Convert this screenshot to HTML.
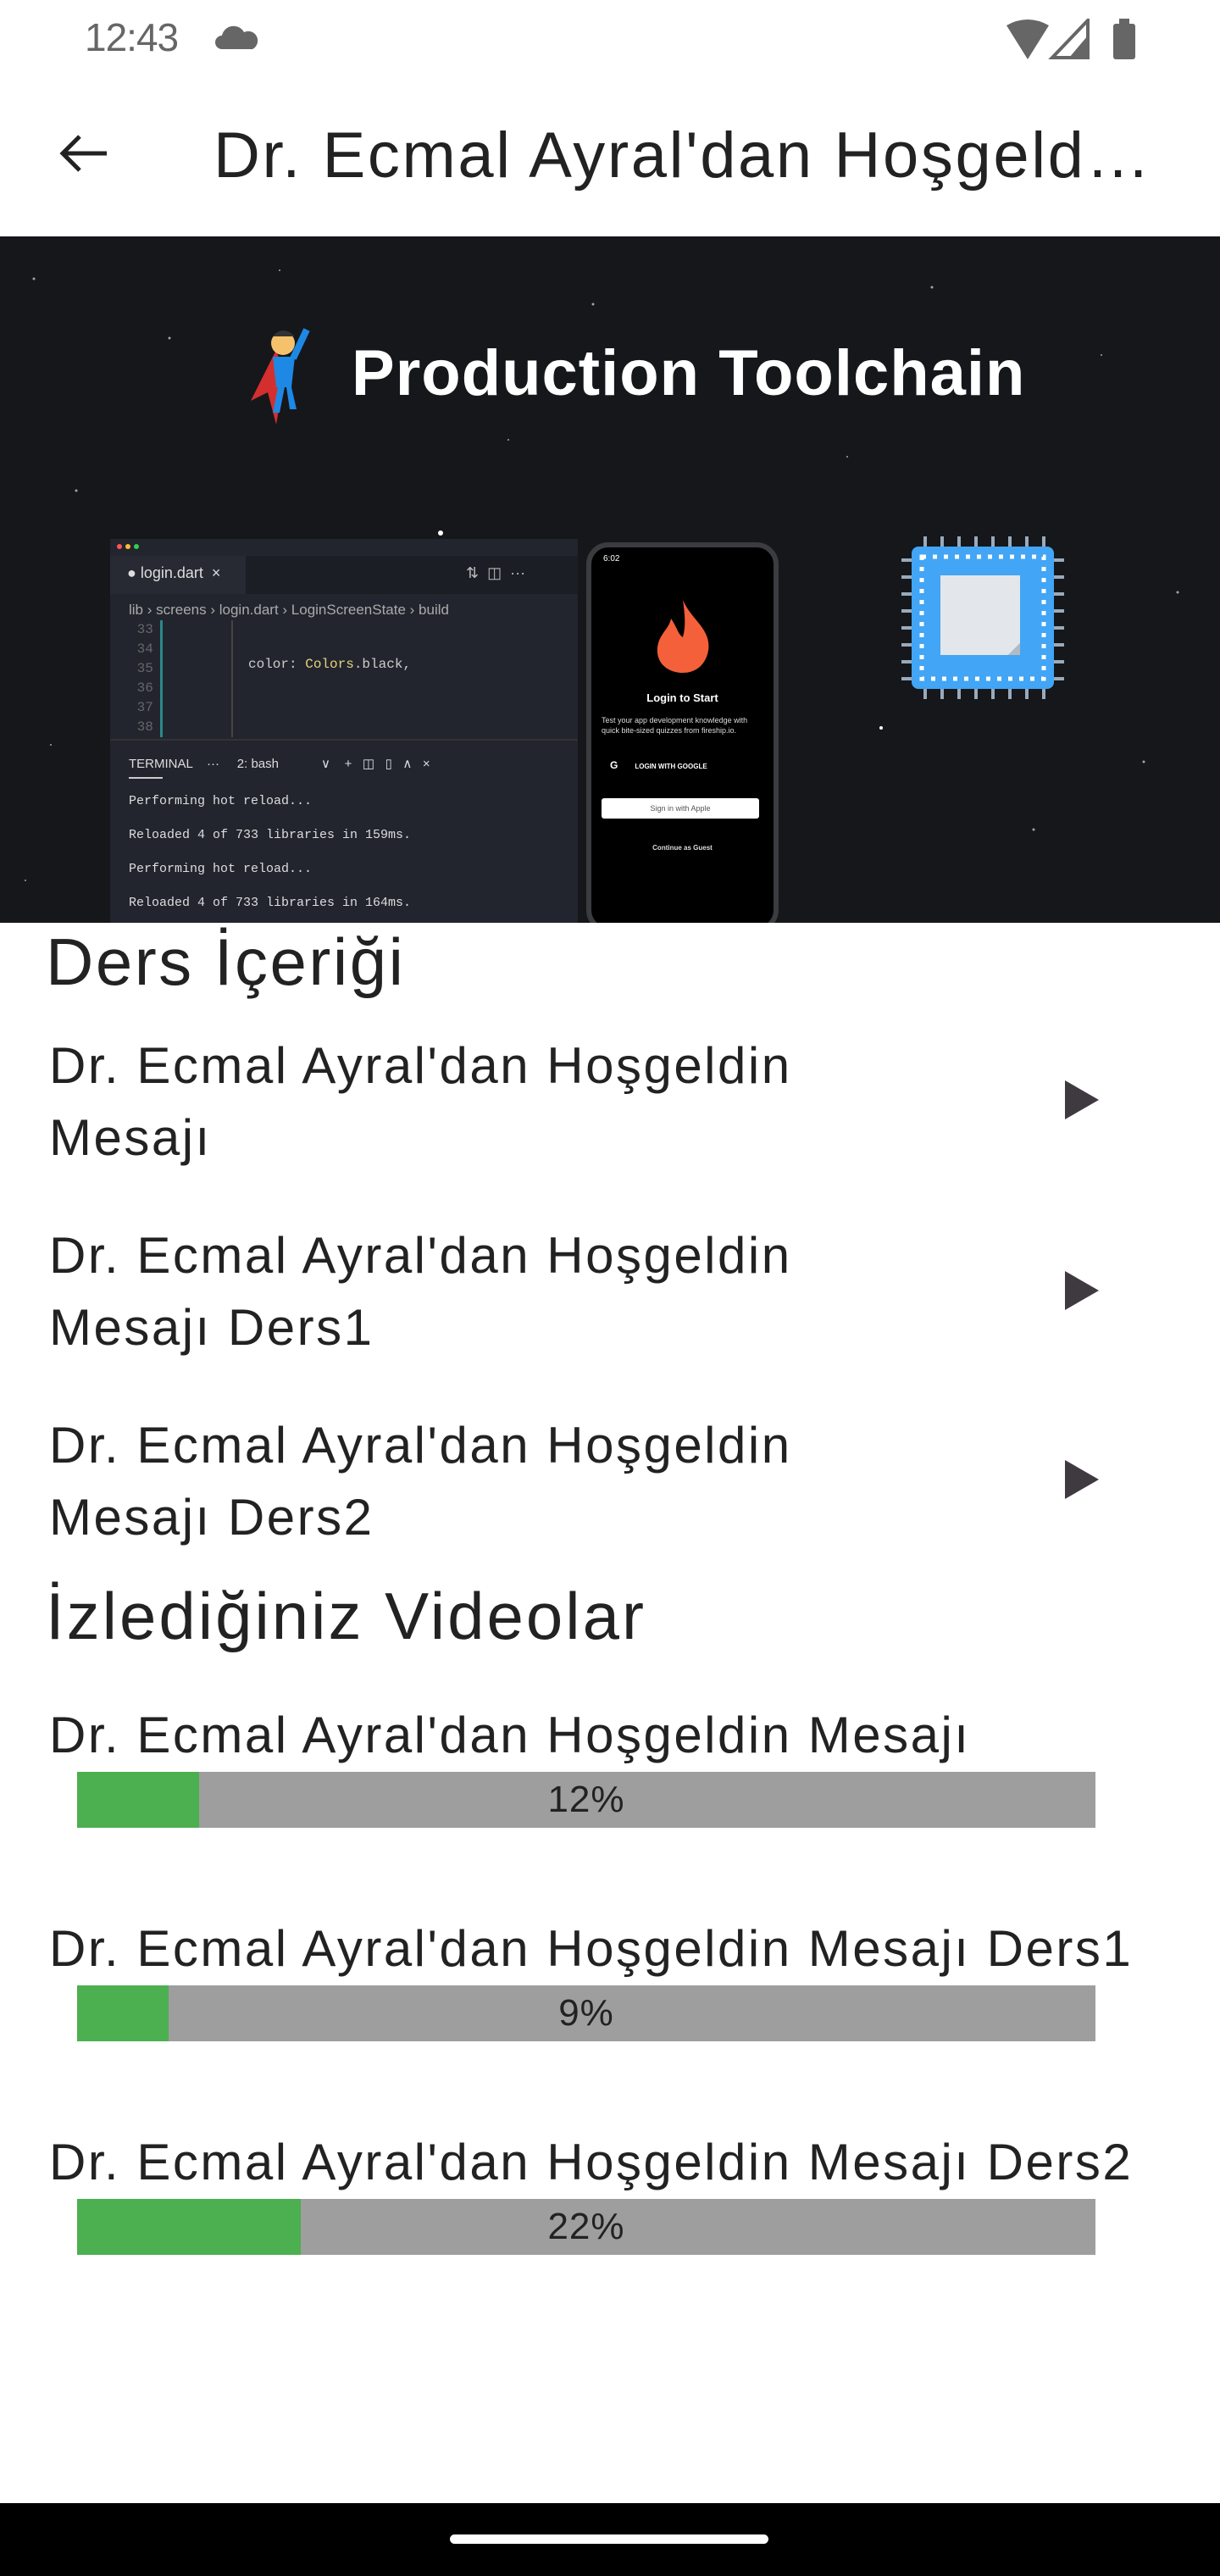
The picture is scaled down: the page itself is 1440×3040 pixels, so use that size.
<!DOCTYPE html>
<html><head><meta charset="utf-8">
<style>
*{margin:0;padding:0;box-sizing:border-box}
body{width:1440px;height:3040px;background:#fff;position:relative;overflow:hidden;font-family:"Liberation Sans",sans-serif;color:#222}
.a{position:absolute;white-space:nowrap}
.item{font-size:60px;letter-spacing:2.5px;color:#222;line-height:85px}
.play{position:absolute;width:0;height:0;border-top:23px solid transparent;border-bottom:23px solid transparent;border-left:40px solid #3f3a40}
.bar{position:absolute;left:91px;width:1202px;height:66px;background:#9e9e9e}
.bar .g{position:absolute;left:0;top:0;bottom:0;background:#4caf50}
.bar .t{position:absolute;left:0;right:0;top:0;text-align:center;font-size:44px;line-height:66px;color:#222;letter-spacing:1px}
.mono{font-family:"Liberation Mono",monospace}
</style></head><body>
<!-- status bar -->
<div class="a" style="left:100px;top:17px;font-size:46px;color:#666;letter-spacing:-1px">12:43</div>
<svg class="a" style="left:254px;top:28px" width="52" height="30" viewBox="0 0 52 30"><path d="M8 30a8 8 0 0 1 0-16 14 14 0 0 1 26-4 10 10 0 0 1 10 20z" fill="#666"/></svg>
<svg class="a" style="left:1186px;top:22px" width="160" height="48" viewBox="0 0 160 48"><path d="M2 8Q27-6 52 8L27 48z" fill="#666"/><path d="M98 2V46H56z" fill="none" stroke="#666" stroke-width="4"/><path d="M98 20V46H76z" fill="#666"/><rect x="128" y="6" width="26" height="42" rx="3" fill="#666"/><rect x="135" y="0" width="12" height="8" fill="#666"/></svg>
<!-- app bar -->
<svg class="a" style="left:68px;top:158px" width="60" height="46" viewBox="0 0 60 46"><path d="M58 23H6M26 3L6 23l20 20" fill="none" stroke="#222" stroke-width="5"/></svg>
<div class="a" style="left:252px;top:140px;font-size:76px;letter-spacing:2.6px;color:#222">Dr. Ecmal Ayral'dan Hoşgeld…</div>
<!-- hero image -->
<div class="a" style="left:0;top:279px;width:1440px;height:810px;background:#15171b;overflow:hidden">
  <svg class="a" style="left:0;top:0" width="1440" height="810">
    <g fill="#9aa">
      <circle cx="40" cy="50" r="1.5"/><circle cx="200" cy="120" r="1.5"/><circle cx="330" cy="40" r="1"/><circle cx="520" cy="350" r="3" fill="#fff"/><circle cx="700" cy="80" r="1.5"/><circle cx="900" cy="160" r="1"/><circle cx="1100" cy="60" r="1.5"/><circle cx="1300" cy="140" r="1"/><circle cx="1390" cy="420" r="1.5"/><circle cx="1040" cy="580" r="2" fill="#fff"/><circle cx="1220" cy="700" r="1.5"/><circle cx="60" cy="600" r="1"/><circle cx="90" cy="300" r="1.5"/><circle cx="1000" cy="260" r="1"/><circle cx="1350" cy="620" r="1.5"/><circle cx="600" cy="240" r="1"/><circle cx="1180" cy="470" r="1.5"/><circle cx="30" cy="760" r="1"/>
    </g>
  </svg>
  <!-- superhero -->
  <svg class="a" style="left:286px;top:104px" width="86" height="120" viewBox="0 0 86 120"><path d="M40 30L10 90 30 80 40 118 50 60z" fill="#d32f2f"/><circle cx="48" cy="22" r="14" fill="#f5c26b"/><path d="M36 14q12-14 26 0z" fill="#333"/><path d="M36 38h26l-4 36H40z" fill="#1e88e5"/><path d="M42 74h8l-6 30h-8zM52 74h6l6 26h-8z" fill="#1e88e5"/><path d="M60 40l16-34" stroke="#1e88e5" stroke-width="8"/></svg>
  <div class="a" style="left:415px;top:118px;font-size:76px;font-weight:bold;color:#fff;letter-spacing:1px">Production Toolchain</div>
  <!-- editor -->
  <div class="a" style="left:130px;top:357px;width:552px;height:453px;background:#22252e">
    <div class="a" style="left:8px;top:6px;width:6px;height:6px;border-radius:50%;background:#f55"></div>
    <div class="a" style="left:18px;top:6px;width:6px;height:6px;border-radius:50%;background:#fb3"></div>
    <div class="a" style="left:28px;top:6px;width:6px;height:6px;border-radius:50%;background:#3c5"></div>
    <div class="a" style="left:0;top:20px;width:552px;height:45px;background:#1c1e25"></div>
    <div class="a" style="left:0;top:20px;width:160px;height:45px;background:#272a33"></div>
    <div class="a" style="left:20px;top:30px;font-size:18px;color:#ddd">● login.dart &nbsp;×</div>
    <div class="a" style="left:420px;top:30px;font-size:18px;color:#bbb">⇅ &nbsp;◫ &nbsp;···</div>
    <div class="a" style="left:22px;top:74px;font-size:17px;color:#aaa">lib › screens › login.dart › LoginScreenState › build</div>
    <div class="a mono" style="left:22px;top:96px;font-size:16px;line-height:23px;color:#666">&nbsp;33<br>&nbsp;34<br>&nbsp;35<br>&nbsp;36<br>&nbsp;37<br>&nbsp;38</div>
    <div class="a" style="left:59px;top:96px;width:3px;height:138px;background:#2a8a8a"></div>
    <div class="a" style="left:143px;top:96px;width:2px;height:138px;background:#444"></div>
    <div class="a mono" style="left:163px;top:139px;font-size:16px;color:#ccc">color: <span style="color:#e6d37a">Colors</span>.black,</div>
    <div class="a" style="left:0;top:236px;width:552px;height:2px;background:#333"></div>
    <div class="a" style="left:22px;top:256px;font-size:15px;color:#ddd">TERMINAL &nbsp;&nbsp; ··· &nbsp;&nbsp;&nbsp; 2: bash &nbsp;&nbsp;&nbsp;&nbsp;&nbsp;&nbsp;&nbsp;&nbsp;&nbsp;&nbsp;&nbsp;∨ &nbsp;&nbsp; + &nbsp; ◫ &nbsp; ▯ &nbsp; ∧ &nbsp; ×</div>
    <div class="a" style="left:22px;top:281px;width:40px;height:2px;background:#ccc"></div>
    <div class="a mono" style="left:22px;top:290px;font-size:15px;line-height:40px;color:#ddd">Performing hot reload...<br>Reloaded 4 of 733 libraries in 159ms.<br>Performing hot reload...<br>Reloaded 4 of 733 libraries in 164ms.</div>
  </div>
  <!-- phone -->
  <div class="a" style="left:692px;top:361px;width:227px;height:460px;background:#000;border:6px solid #3a3c40;border-radius:26px">
    <div class="a" style="left:14px;top:8px;font-size:10px;color:#fff">6:02</div>
    <svg class="a" style="left:72px;top:62px" width="72" height="86" viewBox="0 0 72 86"><path d="M36 0C46 24 70 34 66 60 62 80 48 86 36 86 20 86 4 76 6 56 8 40 20 34 22 22 30 34 30 40 36 44 40 30 38 14 36 0z" fill="#f4603a"/></svg>
    <div class="a" style="left:0;width:215px;top:170px;text-align:center;font-size:13px;font-weight:bold;color:#fff">Login to Start</div>
    <div class="a" style="left:12px;top:198px;font-size:9px;line-height:12px;color:#ddd">Test your app development knowledge with<br>quick bite-sized quizzes from fireship.io.</div>
    <div class="a" style="left:22px;top:250px;font-size:12px;font-weight:bold;color:#fff">G &nbsp;&nbsp;&nbsp;&nbsp;&nbsp;<span style="font-size:8px">LOGIN WITH GOOGLE</span></div>
    <div class="a" style="left:12px;top:296px;width:186px;height:24px;background:#fff;border-radius:3px;font-size:9px;color:#555;text-align:center;line-height:24px">Sign in with Apple</div>
    <div class="a" style="left:0;width:215px;top:350px;text-align:center;font-size:8px;font-weight:bold;color:#ddd">Continue as Guest</div>
  </div>
  <!-- chip -->
  <svg class="a" style="left:1062px;top:352px" width="196" height="196" viewBox="0 0 196 196">
    <g stroke="#9ab" stroke-width="4">
      <path d="M30 2v14M50 2v14M70 2v14M90 2v14M110 2v14M130 2v14M150 2v14M170 2v14M30 180v14M50 180v14M70 180v14M90 180v14M110 180v14M130 180v14M150 180v14M170 180v14M2 30h14M2 50h14M2 70h14M2 90h14M2 110h14M2 130h14M2 150h14M2 170h14M180 30h14M180 50h14M180 70h14M180 90h14M180 110h14M180 130h14M180 150h14M180 170h14"/>
    </g>
    <rect x="14" y="14" width="168" height="168" rx="8" fill="#42a5f5"/>
    <rect x="26" y="26" width="144" height="144" fill="none" stroke="#fff" stroke-width="5" stroke-dasharray="5 8"/>
    <path d="M48 48h94v80l-14 14H48z" fill="#e3e6ea"/><path d="M128 142l14-14v14z" fill="#b5bac0"/>
  </svg>
</div>
<!-- Ders İçeriği -->
<div class="a" style="left:54px;top:1090px;font-size:78px;color:#222;letter-spacing:2.5px">Ders İçeriği</div>
<div class="a item" style="left:58px;top:1215px">Dr. Ecmal Ayral'dan Hoşgeldin<br>Mesajı</div>
<div class="play" style="left:1257px;top:1275px"></div>
<div class="a item" style="left:58px;top:1439px">Dr. Ecmal Ayral'dan Hoşgeldin<br>Mesajı Ders1</div>
<div class="play" style="left:1257px;top:1500px"></div>
<div class="a item" style="left:58px;top:1663px">Dr. Ecmal Ayral'dan Hoşgeldin<br>Mesajı Ders2</div>
<div class="play" style="left:1257px;top:1723px"></div>
<!-- İzlediğiniz Videolar -->
<div class="a" style="left:54px;top:1862px;font-size:78px;color:#222;letter-spacing:3px">İzlediğiniz Videolar</div>
<div class="a item" style="left:58px;top:2005px">Dr. Ecmal Ayral'dan Hoşgeldin Mesajı</div>
<div class="bar" style="top:2091px"><div class="g" style="width:144px"></div><div class="t">12%</div></div>
<div class="a item" style="left:58px;top:2257px">Dr. Ecmal Ayral'dan Hoşgeldin Mesajı Ders1</div>
<div class="bar" style="top:2343px"><div class="g" style="width:108px"></div><div class="t">9%</div></div>
<div class="a item" style="left:58px;top:2509px">Dr. Ecmal Ayral'dan Hoşgeldin Mesajı Ders2</div>
<div class="bar" style="top:2595px"><div class="g" style="width:264px"></div><div class="t">22%</div></div>
<!-- nav bar -->
<div class="a" style="left:0;top:2954px;width:1440px;height:86px;background:#000"></div>
<div class="a" style="left:531px;top:2991px;width:376px;height:11px;border-radius:6px;background:#fff"></div>
</body></html>
